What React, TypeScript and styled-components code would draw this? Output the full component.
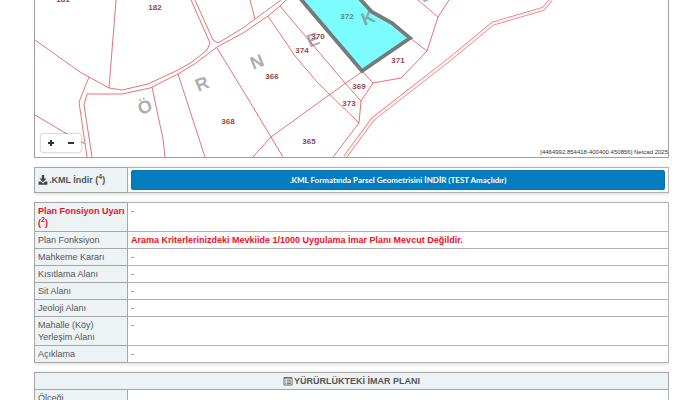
import React from "react";
import styled, { createGlobalStyle } from "styled-components";

const Global = createGlobalStyle`
  * { box-sizing: border-box; }
  body {
    margin: 0;
    background: #fff;
    color: #555;
    font-family: "Liberation Sans", Arial, sans-serif;
    font-size: 9px;
    line-height: 12px;
  }
`;

const Page = styled.main`
  display: flex;
  flex-direction: column;
  gap: 9px;
  margin: 0 31px 0 34px;
  height: 100vh;
  overflow: hidden;
`;

const MapPanel = styled.section`
  position: relative;
  flex: none;
  height: 158px;
  border: 1px solid #a0a0a0;
  border-top: 0;
  overflow: hidden;
`;

const MapDrawing = styled.svg`
  display: block;
  width: 100%;
  height: 157px;
`;

const ParcelLabel = styled.text`
  font-size: 8px;
  font-weight: bold;
  fill: #96464c;
  text-anchor: middle;
`;

const SelectedLabel = styled(ParcelLabel)`
  fill: #4a8f95;
`;

const StreetLetter = styled.text`
  font-size: 18px;
  font-weight: bold;
  fill: #777;
  fill-opacity: 0.62;
  text-anchor: middle;
`;

const ZoomBar = styled.div`
  position: absolute;
  left: 6px;
  bottom: 5px;
  display: flex;
  border-radius: 2px;
  background: #fff;
  box-shadow: 0 0 2px rgba(0, 0, 0, 0.5);
`;

const ZoomButton = styled.button`
  display: flex;
  align-items: center;
  justify-content: center;
  width: 20px;
  height: 18px;
  padding: 0;
  border: 0;
  background: transparent;
  color: #333;
`;

const Coordinates = styled.div`
  position: absolute;
  right: 0;
  bottom: 0;
  color: #333;
  font-size: 6px;
  line-height: 9px;
`;

const Table = styled.table`
  flex: none;
  width: 100%;
  border-collapse: collapse;
  table-layout: fixed;
  box-shadow: 0 1px 4px rgba(0, 0, 0, 0.16);
`;

const LabelCol = styled.col`
  width: 93px;
`;

const Label = styled.th<{ $tone?: "strong" | "alert" }>`
  padding: 2px 0 2px 3px;
  border: 1px solid #a6a6a6;
  background: #edf2f5;
  color: ${(p) => (p.$tone === "alert" ? "#f00d1c" : "#555")};
  font-weight: ${(p) => (p.$tone ? "bold" : "normal")};
  text-align: left;
  vertical-align: ${(p) => (p.$tone === "strong" ? "middle" : "top")};
`;

const Value = styled.td<{ $alert?: boolean }>`
  padding: 2px 3px;
  border: 1px solid #b2b2b2;
  color: ${(p) => (p.$alert ? "#f00d1c" : "#555")};
  font-weight: ${(p) => (p.$alert ? "bold" : "normal")};
  vertical-align: top;
`;

const SectionHead = styled.th`
  padding: 2px 3px;
  border: 1px solid #a6a6a6;
  background: #edf2f5;
  color: #555;
`;

const Note = styled.sup`
  font-size: 7px;
  line-height: 0;
`;

const Icon = styled.svg`
  width: 10px;
  height: 10px;
  margin-right: 1px;
  vertical-align: -2px;
`;

const DownloadButton = styled.button`
  display: block;
  width: 100%;
  height: 20px;
  padding: 0;
  border: 1px solid #0873b3;
  border-radius: 2px;
  background: #047dc0;
  color: #fff;
  font-family: Lato, "Open Sans", sans-serif;
  font-size: 8px;
  font-weight: bold;
  line-height: 12px;
`;

const boundaries = [
  "M116 0L109 88",
  "M35 40L80 72L89 77L109 88L122 90L148 84L178 70L192 62L207 50L210 43L191 0",
  "M195 0L213 40L218 43L243 28L255 19L281 0",
  "M89 77L79 102L87 157",
  "M92 157L84 105L87 94L122 94L150 88L178 74L196 63L217 47L243 33L268 16L280 6L286 0",
  "M35 115L67 134L85 144",
  "M152 87L163 139L165 157",
  "M178 74L205 157",
  "M217 48L250 102L283 157",
  "M253 157L271 137L329 95L363 71",
  "M268 16L295 56L318 83L359 123",
  "M280 6L345 83L361 101L359 123L333 157",
  "M361 101L373 83L363 72",
  "M373 83L401 78L427 51L438 17L449 0",
  "M438 17L418 0",
  "M427 51L410 38",
  "M250 0L255 19",
];

const parcels: [string, number, number][] = [
  ["181", 63, 2],
  ["182", 155, 10],
  ["368", 228, 124],
  ["366", 272, 79],
  ["374", 302, 53],
  ["370", 318, 39],
  ["371", 398, 63],
  ["369", 359, 89],
  ["373", 349, 106],
  ["365", 309, 144],
];

const letters: [string, number, number][] = [
  ["Ö", 145, 107],
  ["R", 202, 84],
  ["N", 257, 62],
  ["E", 313, 40],
  ["K", 368, 18],
  ["-", 425, -1],
];

const rows = [
  { label: "Mahkeme Kararı", value: "-" },
  { label: "Kısıtlama Alanı", value: "-" },
  { label: "Sit Alanı", value: "-" },
  { label: "Jeoloji Alanı", value: "-" },
  { label: "Mahalle (Köy) Yerleşim Alanı", value: "-" },
  { label: "Açıklama", value: "-" },
];

function ParcelMap() {
  return (
    <MapPanel aria-label="Parsel haritası">
      <MapDrawing viewBox="35 0 633 157" preserveAspectRatio="xMidYMid slice">
        <g fill="none" stroke="#e06464" strokeWidth="0.9" strokeLinejoin="round">
          {boundaries.map((d) => (
            <path key={d} d={d} />
          ))}
        </g>
        <path
          d="M345 157L373 119L450 59L493 23.5L543 9L551 0"
          fill="none"
          stroke="#e68484"
          strokeWidth="4"
        />
        <path
          d="M345 157L373 119L450 59L493 23.5L543 9L551 0"
          fill="none"
          stroke="#fff0f0"
          strokeWidth="2.4"
        />
        <path
          d="M299 -3L362 71L410 38L392 23L372 12L358 -3Z"
          fill="#7dfcfd"
          stroke="#757b7b"
          strokeWidth="3.8"
        />
        {parcels.map(([name, x, y]) => (
          <ParcelLabel key={name} x={x} y={y}>
            {name}
          </ParcelLabel>
        ))}
        <SelectedLabel x="347" y="19">
          372
        </SelectedLabel>
        {letters.map(([letter, x, y]) => (
          <StreetLetter
            key={letter}
            x={x}
            y={y}
            dominantBaseline="central"
            transform={`rotate(-22 ${x} ${y})`}
          >
            {letter}
          </StreetLetter>
        ))}
      </MapDrawing>
      <ZoomBar>
        <ZoomButton type="button" aria-label="Yakınlaştır">
          <svg width="8" height="8" viewBox="0 0 8 8">
            <path d="M1 4H7M4 1V7" stroke="currentColor" strokeWidth="2" />
          </svg>
        </ZoomButton>
        <ZoomButton type="button" aria-label="Uzaklaştır">
          <svg width="8" height="8" viewBox="0 0 8 8">
            <path d="M1 4H7" stroke="currentColor" strokeWidth="2" />
          </svg>
        </ZoomButton>
      </ZoomBar>
      <Coordinates>[4464992.854418-400400.450856] Netcad 2025</Coordinates>
    </MapPanel>
  );
}

export default function App() {
  return (
    <>
      <Global />
      <Page>
        <ParcelMap />
        <Table>
          <colgroup>
            <LabelCol />
            <col />
          </colgroup>
          <tbody>
            <tr>
              <Label scope="row" $tone="strong">
                <Icon viewBox="0 0 10 10" aria-hidden="true">
                  <path d="M3.8 0H6.2V3.4H8.6L5 7.2L1.4 3.4H3.8Z" fill="#444" />
                  <path d="M0.6 6.6H2.8L5 8.6L7.2 6.6H9.4V9.8H0.6Z" fill="#444" />
                </Icon>
                .KML İndir (<Note>4</Note>)
              </Label>
              <Value>
                <DownloadButton type="button">
                  .KML Formatında Parsel Geometrisini İNDİR (TEST Amaçlıdır)
                </DownloadButton>
              </Value>
            </tr>
          </tbody>
        </Table>
        <Table>
          <colgroup>
            <LabelCol />
            <col />
          </colgroup>
          <tbody>
            <tr>
              <Label scope="row" $tone="alert">
                Plan Fonsiyon Uyarı (<Note>2</Note>)
              </Label>
              <Value>-</Value>
            </tr>
            <tr>
              <Label scope="row">Plan Fonksiyon</Label>
              <Value $alert>
                Arama Kriterlerinizdeki Mevkiide 1/1000 Uygulama İmar Planı Mevcut Değildir.
              </Value>
            </tr>
            {rows.map((row) => (
              <tr key={row.label}>
                <Label scope="row">{row.label}</Label>
                <Value>{row.value}</Value>
              </tr>
            ))}
          </tbody>
        </Table>
        <Table>
          <colgroup>
            <LabelCol />
            <col />
          </colgroup>
          <thead>
            <tr>
              <SectionHead colSpan={2}>
                <Icon viewBox="0 0 10 10" aria-hidden="true">
                  <path
                    d="M1 1.5H9V9H1ZM1 2.2H9M2.2 4.2H3.2M4 4.2H8M2.2 6H3.2M4 6H8M2.2 7.6H3.2M4 7.6H8"
                    fill="none"
                    stroke="#555"
                    strokeWidth="0.8"
                  />
                </Icon>
                YÜRÜRLÜKTEKİ İMAR PLANI
              </SectionHead>
            </tr>
          </thead>
          <tbody>
            <tr>
              <Label scope="row">Ölçeği</Label>
              <Value />
            </tr>
          </tbody>
        </Table>
      </Page>
    </>
  );
}
